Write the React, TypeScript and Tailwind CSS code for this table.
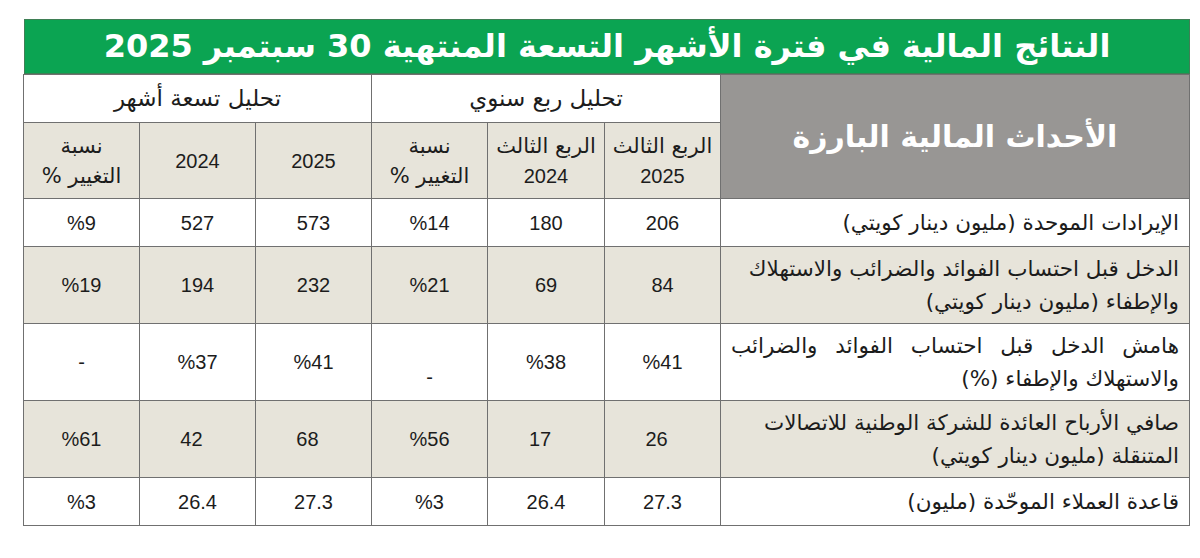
const AR = "font-['DejaVu_Sans',sans-serif]";
const NUM = "font-['Liberation_Sans_Narrow','Liberation_Sans',sans-serif]";

type Row = {
  label: React.ReactNode;
  values: string[];
  tall: boolean;
  shaded: boolean;
};

const rows: Row[] = [
  {
    label: "الإيرادات الموحدة  (مليون دينار كويتي)",
    values: ["206", "180", "%14", "573", "527", "%9"],
    tall: false,
    shaded: false,
  },
  {
    label: (
      <>
        الدخل قبل احتساب الفوائد والضرائب والاستهلاك
        <br />
        والإطفاء (مليون دينار كويتي)
      </>
    ),
    values: ["84", "69", "%21", "232", "194", "%19"],
    tall: true,
    shaded: true,
  },
  {
    label: (
      <>
        <span className="block [text-align-last:justify]">هامش الدخل قبل احتساب الفوائد والضرائب</span>
        والاستهلاك والإطفاء (%)
      </>
    ),
    values: ["%41", "%38", "-", "%41", "%37", "-"],
    tall: true,
    shaded: false,
  },
  {
    label: (
      <>
        صافي الأرباح العائدة للشركة الوطنية للاتصالات
        <br />
        المتنقلة (مليون دينار كويتي)
      </>
    ),
    values: ["26", "17", "%56", "68", "42", "%61"],
    tall: true,
    shaded: true,
  },
  {
    label: "قاعدة العملاء الموحّدة (مليون)",
    values: ["27.3", "26.4", "%3", "27.3", "26.4", "%3"],
    tall: false,
    shaded: false,
  },
];

const cell = "border border-[#707070] p-0";

export default function App() {
  return (
    <div className="h-[558px] w-[1200px] bg-white pt-[19px] pl-[24px]">
      <div className="w-[1166px]" dir="rtl">
        <div
          className={`flex h-[55px] items-center justify-center border border-[#3f7f55] bg-[#0ba452] pb-[2px] text-[32px] font-bold text-white ${AR}`}
        >
          النتائج المالية في فترة الأشهر التسعة المنتهية 30 سبتمبر 2025
        </div>
        <table className="w-[1166px] table-fixed border-collapse text-[#1c1c1c]">
          <colgroup>
            <col className="w-[469px]" />
            <col className="w-[116px]" />
            <col className="w-[117px]" />
            <col className="w-[116px]" />
            <col className="w-[116px]" />
            <col className="w-[116px]" />
            <col className="w-[116px]" />
          </colgroup>
          <thead>
            <tr className="h-[48px]">
              <th
                rowSpan={2}
                className={`${cell} bg-[#989694] text-[30px] font-bold text-white ${AR}`}
              >
                الأحداث المالية البارزة
              </th>
              <th colSpan={3} className={`${cell} bg-white text-[23px] font-normal ${AR}`}>
                تحليل ربع سنوي
              </th>
              <th colSpan={3} className={`${cell} bg-white text-[23px] font-normal ${AR}`}>
                تحليل تسعة أشهر
              </th>
            </tr>
            <tr className="h-[76px] bg-[#e7e4da]">
              <th className={`${cell} text-[21px] font-normal leading-[30px]`}>
                <div className={AR}>الربع الثالث</div>
                <div className={`${NUM} text-[20px]`}>2025</div>
              </th>
              <th className={`${cell} text-[21px] font-normal leading-[30px]`}>
                <div className={AR}>الربع الثالث</div>
                <div className={`${NUM} text-[20px]`}>2024</div>
              </th>
              <th className={`${cell} text-[21px] font-normal leading-[30px] ${AR}`}>
                <div>نسبة</div>
                <div>التغيير %</div>
              </th>
              <th className={`${cell} text-[20px] font-normal ${NUM}`}>2025</th>
              <th className={`${cell} text-[20px] font-normal ${NUM}`}>2024</th>
              <th className={`${cell} text-[21px] font-normal leading-[30px] ${AR}`}>
                <div>نسبة</div>
                <div>التغيير %</div>
              </th>
            </tr>
          </thead>
          <tbody>
            {rows.map((r, i) => (
              <tr
                key={i}
                className={`${r.tall ? "h-[77px]" : "h-[48px]"} ${r.shaded ? "bg-[#e7e4da]" : "bg-white"}`}
              >
                <td
                  className={`${cell} whitespace-nowrap px-[10px] text-right text-[21.5px] leading-[33px] ${AR}`}
                >
                  {r.label}
                </td>
                {r.values.map((v, j) => (
                  <td
                    key={j}
                    dir="ltr"
                    className={`${cell} text-center text-[20px] ${NUM} ${
                      i === 2 && j === 2 ? "pt-[30px]" : ""
                    } ${i === 3 && (j === 0 || j === 1 || j === 3 || j === 4) ? "pr-[12px]" : ""}`}
                  >
                    {v}
                  </td>
                ))}
              </tr>
            ))}
          </tbody>
        </table>
      </div>
    </div>
  );
}
